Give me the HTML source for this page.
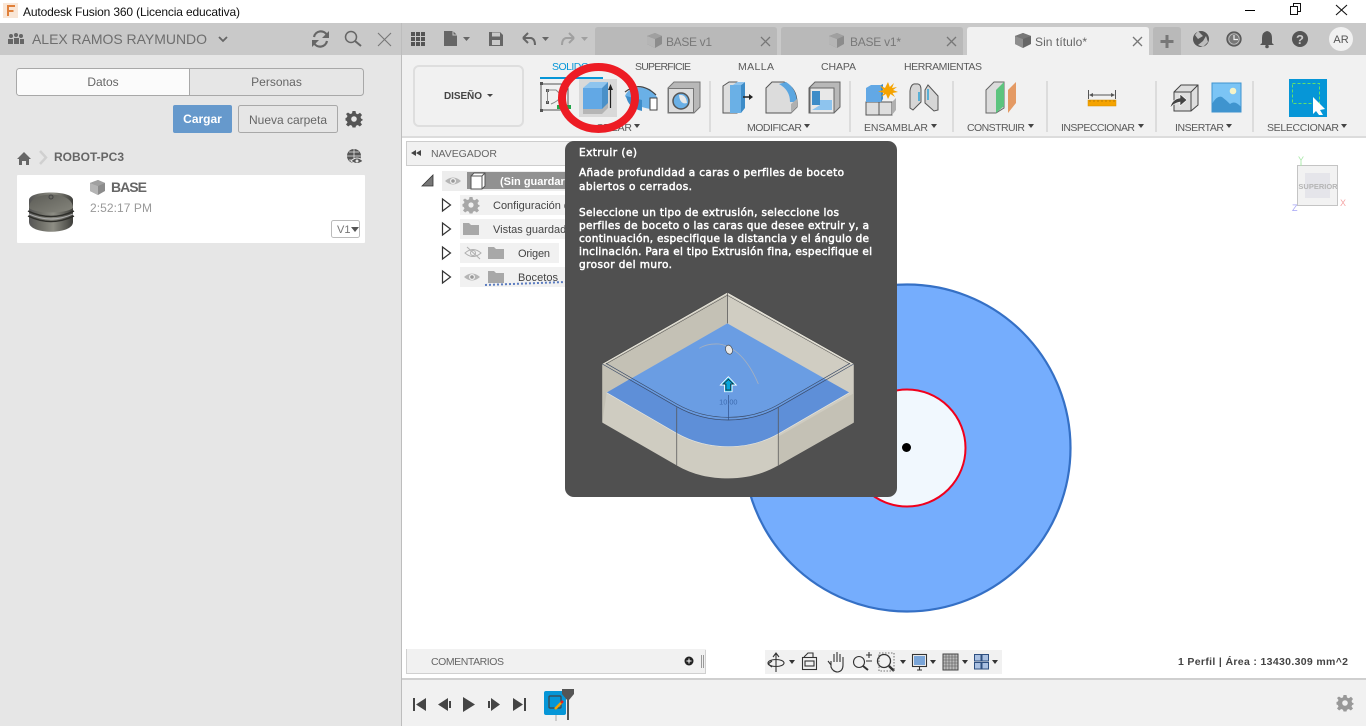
<!DOCTYPE html>
<html lang="es"><head><meta charset="utf-8"><title>Autodesk Fusion 360</title>
<style>
html,body{margin:0;padding:0;width:1366px;height:726px;overflow:hidden;background:#fff}
svg{position:absolute;left:0;top:0;display:block}
text{font-family:"Liberation Sans",sans-serif;font-size:11px;fill:#555}
.r{font-size:10.5px;fill:#5a5a5a}
.tt{font-family:"DejaVu Sans",sans-serif;font-size:10.5px;fill:#fff;stroke:#fff;stroke-width:.5}
.tree{font-size:11px;fill:#444}
</style></head><body>
<svg width="1366" height="726" viewBox="0 0 1366 726" xmlns="http://www.w3.org/2000/svg">
<defs>
<linearGradient id="th" x1="0" x2="1" y1="0" y2="0"><stop offset="0" stop-color="#555"/><stop offset=".25" stop-color="#6d6d66"/><stop offset=".55" stop-color="#8d8d84"/><stop offset=".85" stop-color="#5a5a54"/><stop offset="1" stop-color="#3e3e3a"/></linearGradient>
<linearGradient id="tht" x1="0" x2="1" y1="0" y2="1"><stop offset="0" stop-color="#5c5c56"/><stop offset="1" stop-color="#85857c"/></linearGradient>
<g id="cube"><path d="M0 3L8 0L15 3V11L8 15L0 11Z" fill="#8c8c8c"/><path d="M0 3L8 6V15L0 11Z" fill="#b5b5b5"/><path d="M0 3L8 0L15 3L8 6Z" fill="#a0a0a0"/></g>
<g id="tri"><path d="M1.500 1L9.500 7L1.500 13Z" fill="#fff" stroke="#333" stroke-width="1.200"/></g>
<g id="eye"><path d="M-8 0Q0 -7 8 0Q0 7 -8 0Z" fill="#b5b5b5"/><circle r="3" fill="#f1f1f1"/><circle r="1.800" fill="#999"/></g>
<g id="folder"><path d="M0 2H6L8 4H16V14H0Z" fill="#a8a8a8"/></g>
<path id="gearp" d="M-1.500 -8H1.500L2 -5.500L3.800 -4.800L6 -6.200L8 -4L6.500 -2L7.200 -.3L8.500 0V1.500L7.200 2L6.500 3.500L8 5.500L5.800 7.500L3.800 6L2 6.700L1.500 8.500H-1.500L-2 6.700L-3.800 6L-5.800 7.500L-8 5.500L-6.500 3.500L-7.200 2L-8.500 1.500V-1L-7.200 -1.500L-6.500 -3L-8 -5L-6 -6.500L-3.800 -5L-2 -5.600Z"/>
</defs>

<!-- Base regions -->
<rect width="1366" height="23" fill="#fff"/>
<rect x="0" y="23" width="401" height="703" fill="#e6e6e6"/>
<rect x="0" y="23" width="1366" height="32" fill="#c9c9c9"/>
<rect x="401" y="23" width="1" height="703" fill="#bdbdbd"/>
<rect x="402" y="55" width="964" height="81" fill="#f1f1f1"/>
<rect x="402" y="136" width="964" height="2" fill="#dcdcdc"/>
<rect x="402" y="678" width="964" height="2" fill="#cfcfcf"/>
<rect x="402" y="680" width="964" height="46" fill="#f1f1f1"/>

<!-- Title bar -->
<rect x="3" y="3" width="15" height="15" fill="#f9e6d6"/>
<path d="M7 5H15V7H9V10H13.500V12H9V16H7Z" fill="#e0803a"/>
<text x="23" y="16" style="font-size:12px;fill:#111" textLength="217">Autodesk Fusion 360 (Licencia educativa)</text>
<rect x="1245" y="10" width="10" height="1" fill="#000"/>
<path d="M1293.500 6.500V3.500H1300.500V11.500H1297.500M1290.500 6.500H1297.500V14.500H1290.500Z" fill="none" stroke="#111"/>
<path d="M1336 5L1347 15M1347 5L1336 15" stroke="#111" stroke-width="1.100"/>

<!-- Left panel header -->
<g fill="#666"><circle cx="11" cy="36" r="2"/><circle cx="16" cy="35" r="2"/><circle cx="21" cy="36" r="2"/><rect x="8" y="39" width="5" height="5"/><rect x="14" y="38" width="5" height="6"/><rect x="20" y="39" width="4" height="5"/></g>
<text x="32" y="44" style="font-size:14px;fill:#6e6e6e" textLength="175">ALEX RAMOS RAYMUNDO</text>
<path d="M219 37L223 41L227 37" fill="none" stroke="#666" stroke-width="1.800"/>
<path d="M327 35A7 7 0 0 0 314 37M314 43A7 7 0 0 0 327 41" fill="none" stroke="#666" stroke-width="2.200"/><path d="M329 31V38H322ZM312 47V40H319Z" fill="#666"/>
<circle cx="351" cy="37" r="5.500" fill="none" stroke="#666" stroke-width="1.500"/><path d="M355 41L361 46" stroke="#666" stroke-width="2"/>
<path d="M378 33L391 46M391 33L378 46" stroke="#777" stroke-width="1.100"/>

<!-- Segmented -->
<rect x="16.500" y="68.500" width="347" height="27" rx="3" fill="#e6e6e6" stroke="#a8a8a8"/>
<path d="M189.500 69V95H19.500Q17 95 17 92V72Q17 69 19.500 69Z" fill="#fbfbfb"/>
<path d="M189.500 68V96" stroke="#a8a8a8"/>
<text x="103" y="86" text-anchor="middle" style="font-size:12px;fill:#666">Datos</text>
<text x="276.500" y="86" text-anchor="middle" style="font-size:12px;fill:#666">Personas</text>
<rect x="173" y="105" width="59" height="28" rx="2" fill="#6699cc"/>
<text x="202.500" y="123" text-anchor="middle" style="font-size:12px;font-weight:bold;fill:#fff">Cargar</text>
<rect x="238.500" y="105.500" width="99" height="27" rx="2" fill="#e6e6e6" stroke="#a8a8a8"/>
<text x="249" y="124" style="font-size:12px;fill:#666" textLength="78">Nueva carpeta</text>
<g transform="translate(354 119)" fill="#555"><use href="#gearp"/><circle r="2.800" fill="#e6e6e6"/></g>

<!-- Breadcrumb -->
<path d="M17 159L24 152L31 159H29V165H26V161H22V165H19V159Z" fill="#666"/>
<path d="M40 151L46 157.500L40 164" fill="none" stroke="#d0d0d0" stroke-width="2.500"/>
<text x="54" y="161" style="font-size:12px;font-weight:bold;fill:#666" textLength="70">ROBOT-PC3</text>
<circle cx="354" cy="156" r="7" fill="#555"/><path d="M347 156H361M354 149V163M349 152H359M349 160H359" stroke="#e6e6e6" stroke-width=".8"/>
<path d="M351 161Q357 155 363 161Q357 166 351 161Z" fill="#555" stroke="#e6e6e6"/><circle cx="357" cy="161" r="1.500" fill="#e6e6e6"/>

<!-- Card -->
<rect x="17" y="175" width="348" height="68" rx="1" fill="#fff"/>
<path d="M29 200C29 190 73 190 73 200V222C73 235 29 235 29 222Z" fill="url(#th)"/>
<path d="M29 208C29 190 73 190 73 208C66 214 36 214 29 208Z" fill="url(#tht)"/>
<circle cx="51" cy="197" r="2" fill="none" stroke="#444"/>
<path d="M28 211Q51 222 74 211M28 216Q51 227 74 216" fill="none" stroke="#2e2e2a" stroke-width="1.500"/><path d="M29 214Q51 224 73 214" fill="none" stroke="#aaa"/>

<use href="#cube" x="90" y="180"/>
<text x="111" y="192" style="font-size:14px;font-weight:bold;fill:#666" textLength="36">BASE</text>
<text x="90" y="212" style="font-size:12px;fill:#999" textLength="62">2:52:17 PM</text>
<rect x="331.500" y="220.500" width="28" height="17" rx="2" fill="#fff" stroke="#bbb"/>
<text x="337" y="233" style="font-size:11px;fill:#777">V1</text><path d="M351 227H359L355 232Z" fill="#555"/>

<!-- Top bar icons -->
<g fill="#555"><rect x="411" y="32" width="4" height="4"/><rect x="416" y="32" width="4" height="4"/><rect x="421" y="32" width="4" height="4"/><rect x="411" y="37" width="4" height="4"/><rect x="416" y="37" width="4" height="4"/><rect x="421" y="37" width="4" height="4"/><rect x="411" y="42" width="4" height="4"/><rect x="416" y="42" width="4" height="4"/><rect x="421" y="42" width="4" height="4"/></g>
<path d="M444 31H453L457 35V46H444Z" fill="#666"/><path d="M453 31V35H457" fill="none" stroke="#c9c9c9"/>
<path d="M463 37H470L466.500 41Z" fill="#666"/>
<path d="M489 32H500L503 35V46H489Z" fill="#666"/><rect x="492" y="32.500" width="8" height="4" fill="#c9c9c9"/><rect x="492" y="40" width="8" height="5" fill="#c9c9c9"/>
<path d="M523 38L528 33M523 38L528 43M524 38H531Q535 39 535 45" fill="none" stroke="#666" stroke-width="2"/>
<path d="M542 37H549L545.500 41Z" fill="#666"/>
<path d="M574 38L569 33M574 38L569 43M573 38H566Q562 39 562 45" fill="none" stroke="#a0a0a0" stroke-width="2"/>
<path d="M581 37H588L584.500 41Z" fill="#a0a0a0"/>

<!-- Tabs -->
<path d="M595 55V30Q595 27 598 27H774Q777 27 777 30V55Z" fill="#b9b9b9"/>
<path d="M781 55V30Q781 27 784 27H960Q963 27 963 30V55Z" fill="#b9b9b9"/>
<path d="M967 55V30Q967 27 970 27H1146Q1149 27 1149 30V55Z" fill="#f1f1f1"/>
<path d="M1153 55V30Q1153 27 1156 27H1178Q1181 27 1181 30V55Z" fill="#b9b9b9"/>
<use href="#cube" x="647" y="33"/><use href="#cube" x="829" y="33"/>
<g transform="translate(1015 33)"><path d="M0 3L8 0L16 3V11L8 15L0 11Z" fill="#666"/><path d="M0 3L8 6V15L0 11Z" fill="#8e8e8e"/><path d="M0 3L8 0L16 3L8 6Z" fill="#777"/></g>
<text x="666" y="46" style="font-size:12px;fill:#787878" textLength="46">BASE v1</text>
<text x="850" y="46" style="font-size:12px;fill:#787878" textLength="51">BASE v1*</text>
<text x="1035" y="46" style="font-size:12px;fill:#666" textLength="52">Sin título*</text>
<path d="M761 37L770 46M770 37L761 46M947 37L956 46M956 37L947 46" stroke="#777" stroke-width="1.300"/>
<path d="M1133 37L1142 46M1142 37L1133 46" stroke="#777" stroke-width="1.300"/>
<path d="M1167 35V48M1160.500 41.500H1173.500" stroke="#777" stroke-width="3"/>
<circle cx="1201" cy="39" r="8" fill="#555"/><path d="M1198 31L1203 36L1198 39L1195 35ZM1206 36L1208 42L1203 47L1198 45L1203 41Z" fill="#c9c9c9" opacity=".9"/>
<circle cx="1234" cy="39" r="7" fill="#777" stroke="#555" stroke-width="1.300"/><circle cx="1234" cy="39" r="5.200" fill="#777" stroke="#c9c9c9" stroke-width=".7"/><path d="M1234 35V39.500H1238" fill="none" stroke="#eee" stroke-width="1.200"/>
<path d="M1267 31Q1272 32 1272 38V43L1274 45H1260L1262 43V38Q1262 32 1267 31Z" fill="#555"/><circle cx="1267" cy="46.500" r="1.800" fill="#555"/>
<circle cx="1300" cy="39" r="8" fill="#555"/><text x="1300" y="44" text-anchor="middle" style="font-size:13px;font-weight:bold;fill:#c9c9c9">?</text>
<circle cx="1341" cy="39" r="12" fill="#f1f1f1"/><text x="1341" y="43" text-anchor="middle" style="font-size:11px;fill:#555">AR</text>

<!-- Ribbon tabs -->
<text x="552" y="70" style="font-size:10.500px;fill:#0696d7" textLength="37">SOLIDO</text>
<rect x="540" y="77" width="63" height="2" fill="#0696d7"/>
<text x="635" y="70" class="r" textLength="56">SUPERFICIE</text>
<text x="738" y="70" class="r" textLength="36">MALLA</text>
<text x="821" y="70" class="r" textLength="35">CHAPA</text>
<text x="904" y="70" class="r" textLength="78">HERRAMIENTAS</text>

<rect x="414" y="66" width="109" height="60" rx="5" fill="#f1f1f1" stroke="#dedede" stroke-width="2"/>
<text x="444" y="99" style="font-size:10px;font-weight:bold;fill:#444" textLength="38">DISEÑO</text>
<path d="M487 94H493L490 97Z" fill="#444"/>

<!-- separators -->
<g fill="#dcdcdc"><rect x="709" y="81" width="2" height="51"/><rect x="849" y="81" width="2" height="51"/><rect x="952" y="81" width="2" height="51"/><rect x="1046" y="81" width="2" height="51"/><rect x="1155" y="81" width="2" height="51"/><rect x="1252" y="81" width="2" height="51"/></g>

<!-- Sketch icon -->
<rect x="541" y="84" width="27" height="26" fill="none" stroke="#555"/>
<g fill="#555"><rect x="540" y="82" width="3" height="3"/><rect x="540" y="109" width="3" height="3"/><rect x="566" y="82" width="3" height="3"/><rect x="546" y="89" width="3" height="3"/><rect x="546" y="101" width="3" height="3"/></g>
<path d="M547.500 103V90H556Q566 98 551 104" fill="none" stroke="#888"/>
<rect x="557" y="105" width="14" height="4" fill="#21a649"/>

<!-- Extrude -->
<rect x="579" y="79" width="38" height="38" fill="#d9d9d9"/>
<path d="M583 108V114H602L608 108V103Z" fill="#b5b5b5"/>
<rect x="583" y="88" width="19" height="21" fill="#62a8e5"/>
<path d="M583 88L590 82H608L602 88Z" fill="#8ec4ee"/>
<path d="M602 88L608 82V103L602 109Z" fill="#4a90c8"/>
<path d="M610.500 88V108" stroke="#222" stroke-width="1.200"/><path d="M608 90L610.500 84L613 90Z" fill="#222"/>

<!-- Revolve -->
<path d="M625 96Q630 84 650 89L657 97V109H650Q630 105 625 96Z" fill="#6ab0e6"/>
<path d="M625 92Q640 80 656 95" fill="none" stroke="#444" stroke-width="1.200"/>
<path d="M626 96Q628 108 642 111V100Z" fill="#3d8cc8"/>
<rect x="650" y="98" width="7" height="12" fill="#fff" stroke="#444"/>
<!-- Hole -->
<path d="M668 88L674 82H700V107L694 113H668Z" fill="#b8b8b8" stroke="#777"/>
<rect x="668.500" y="88.500" width="25" height="24" fill="#dcdcdc" stroke="#777"/>
<circle cx="681" cy="101" r="8" fill="#6ab0e6" stroke="#555" stroke-width="1.500"/>
<path d="M679 95Q686 94 687 103Q680 105 679 95Z" fill="#e8e8e8"/>

<!-- Press pull -->
<path d="M723 86L729 82H737V113H723Z" fill="#dedede" stroke="#555"/>
<path d="M730 85H741V113H730Z" fill="#6ab0e6"/><path d="M741 85L745 82V108L741 113Z" fill="#3d8cc8"/>
<path d="M733 85L737 82H745L741 85Z" fill="#8ec4ee"/>
<path d="M743 97H750" stroke="#222" stroke-width="1.500"/><path d="M749 94L753 97L749 100Z" fill="#222"/>
<!-- Fillet -->
<path d="M766 88L772 82H784Q797 88 797 103V107L791 113H766Z" fill="#dcdcdc" stroke="#555"/>
<path d="M779 84L786 82Q796 88 797 102L790 102Q790 90 779 84Z" fill="#5ba6e0"/>
<path d="M791 113V104L797 99V107Z" fill="#b0b0b0"/>
<!-- Shell -->
<path d="M809 88L815 82H840V107L834 113H809Z" fill="#b8b8b8" stroke="#666"/>
<rect x="810" y="88" width="24" height="25" fill="#e8e8e8" stroke="#666"/>
<path d="M812 91H820V105H812Z" fill="#3d8cc8"/><path d="M820 100H832V110H812L820 105Z" fill="#8ec4ee"/>

<!-- Assemble -->
<rect x="866" y="102" width="13" height="13" fill="#dedede" stroke="#555"/><rect x="879" y="102" width="13" height="13" fill="#dedede" stroke="#555"/>
<path d="M892 102L896 98V110L892 115Z" fill="#b0b0b0"/>
<path d="M866 88L871 85H881V102H866Z" fill="#62a8e5"/><path d="M881 85L883 84V99L881 102Z" fill="#3d8cc8"/>
<path d="M888 82L889.800 87L894 83L892 88L897 87L893 90L898 92L892.500 93L895 97L890.500 94L888 99L886 94L881 97L884 93L878 91.500L883.500 90L880 85.500L885 88Z" fill="#f5a300"/>
<path d="M910 91Q911 83 916 84Q921 83 921 90V102L913 110L910 108Z" fill="#d6d6d6" stroke="#555"/>
<path d="M925 90L928 85L938 96V110L934 111L925 103Z" fill="#d6d6d6" stroke="#555"/>
<path d="M919 92V101M928 89V100" stroke="#0696d7" stroke-width="1.200"/>

<!-- Construct -->
<path d="M986 90L994 82H1004V108L996 113H986Z" fill="#dcdcdc" stroke="#666"/>
<path d="M996 90L1004 82V106L996 113Z" fill="#5cc47e"/>
<path d="M1008 90L1016 82V103L1008 113Z" fill="#e49a64"/>

<!-- Inspect -->
<rect x="1088" y="100" width="28" height="6" fill="#f5a300" stroke="#d48c00" stroke-width=".5"/>
<path d="M1090 100V102M1094 100V102M1098 100V102M1102 100V102M1106 100V102M1110 100V102M1114 100V102" stroke="#a86f00" stroke-width=".7"/>
<path d="M1088.500 90V99M1115.500 90V99M1090 95H1114" stroke="#555"/><path d="M1089 95L1093 93V97ZM1115 95L1111 93V97Z" fill="#555"/>

<!-- Insert -->
<path d="M1174 92L1181 85H1198V105L1191 111H1174Z" fill="#dedede" stroke="#444"/><path d="M1174 92H1191V111M1191 92L1198 85" fill="none" stroke="#444"/>
<path d="M1170 108Q1172 99 1180 98V94L1187 100L1180 106V102Q1174 103 1170 108Z" fill="#444" stroke="#fff" stroke-width=".6"/>
<!-- Image -->
<rect x="1212" y="83" width="29" height="29" fill="#7bc4f5" stroke="#3f94cf"/>
<circle cx="1233" cy="91" r="3.300" fill="#f5f3c8"/>
<path d="M1212 112V104Q1217 95 1222 97Q1226 100 1230 104Q1235 100 1241 107V112Z" fill="#3f94cf"/>

<!-- Select -->
<rect x="1289" y="79" width="38" height="38" fill="#0696d7"/>
<rect x="1292.500" y="83.500" width="27" height="20" fill="none" stroke="#62e06c" stroke-dasharray="3 2"/>
<path d="M1313 97L1325 109L1320 110L1323 115L1319 115L1316 111L1313 114Z" fill="#fff"/>

<!-- Ribbon group labels -->
<text x="596" y="131" class="r" textLength="36">CREAR</text>
<text x="747" y="131" class="r" textLength="55">MODIFICAR</text>
<text x="864" y="131" class="r" textLength="64">ENSAMBLAR</text>
<text x="967" y="131" class="r" textLength="58">CONSTRUIR</text>
<text x="1061" y="131" class="r" textLength="74">INSPECCIONAR</text>
<text x="1175" y="131" class="r" textLength="49">INSERTAR</text>
<text x="1267" y="131" class="r" textLength="72">SELECCIONAR</text>
<g fill="#444"><path d="M634 124H640L637 128Z"/><path d="M804 124H810L807 128Z"/><path d="M931 124H937L934 128Z"/><path d="M1028 124H1034L1031 128Z"/><path d="M1138 124H1144L1141 128Z"/><path d="M1226 124H1232L1229 128Z"/><path d="M1341 124H1347L1344 128Z"/></g>

<!-- Red ring -->
<ellipse cx="598.500" cy="98" rx="36.500" ry="31" fill="none" stroke="#ed1c24" stroke-width="8"/>

<!-- Canvas geometry -->
<circle cx="907" cy="448" r="163.500" fill="#75adfd" stroke="#3570c5" stroke-width="2.200"/>
<circle cx="907" cy="448" r="58.500" fill="#f1f8fe" stroke="#f0001c" stroke-width="2"/>
<circle cx="906.500" cy="447.500" r="4.500" fill="#000"/>

<!-- ViewCube -->
<rect x="1297.500" y="165.500" width="40" height="40" fill="#f2f2f2" stroke="#c4c4c4"/>
<rect x="1305" y="173" width="25" height="25" fill="#e5e5ea"/>
<text x="1318" y="189" text-anchor="middle" style="font-size:7.500px;font-weight:bold;fill:#b5b5b5">SUPERIOR</text>
<text x="1298" y="163" style="font-size:9px;fill:#a8e8a8">Y</text>
<text x="1340" y="206" style="font-size:9px;fill:#f5a5a5">X</text>
<text x="1292" y="211" style="font-size:9px;fill:#a5a5f5">Z</text>
<path d="M1301 163V166" stroke="#a8e8a8"/>

<!-- Navigator -->
<rect x="406.500" y="141.500" width="170" height="24" fill="#f1f1f1" stroke="#cdcdcd"/>
<path d="M416 150V156L411 153ZM421 150V156L416 153Z" fill="#444"/>
<text x="431" y="157" style="font-size:10.500px;fill:#666" textLength="66">NAVEGADOR</text>

<path d="M422 186L433 175V186Z" fill="#777" stroke="#333" stroke-width=".8"/>
<rect x="442" y="171" width="135" height="20" fill="#ededed"/>
<rect x="467" y="172" width="110" height="17" fill="#919191"/>
<use href="#eye" x="453" y="181"/>
<path d="M471 176L474 173H485V186L482 189H471Z" fill="#fff" stroke="#555"/><path d="M471 176H482V189M482 176L485 173" fill="none" stroke="#555"/>
<text x="500" y="185" style="font-weight:bold;fill:#fff">(Sin guardar</text>

<use href="#tri" x="441" y="198"/><rect x="460" y="195" width="117" height="20" fill="#f1f1f1"/>
<g transform="translate(471 205)" fill="#a8a8a8"><use href="#gearp"/><circle r="2.600" fill="#f1f1f1"/></g>
<text x="493" y="209" class="tree">Configuración d</text>

<use href="#tri" x="441" y="222"/><rect x="460" y="219" width="117" height="20" fill="#f1f1f1"/>
<use href="#folder" x="463" y="221"/>
<text x="493" y="233" class="tree">Vistas guardad</text>

<use href="#tri" x="441" y="246"/><rect x="460" y="243" width="99" height="20" fill="#f1f1f1"/>
<path d="M465 253Q473 246 481 253Q473 260 465 253Z" fill="none" stroke="#b0b0b0"/><circle cx="473" cy="253" r="2.500" fill="none" stroke="#b0b0b0"/><path d="M467 247L480 259" stroke="#b0b0b0"/>
<use href="#folder" x="488" y="245"/>
<text x="518" y="257" class="tree" textLength="32">Origen</text>

<use href="#tri" x="441" y="270"/><rect x="460" y="267" width="117" height="20" fill="#f1f1f1"/>
<use href="#eye" x="472" y="277"/>
<use href="#folder" x="488" y="269"/>
<text x="518" y="281" class="tree" textLength="40">Bocetos</text>
<path d="M485 285L565 282" stroke="#5b7cc0" stroke-width="2" stroke-dasharray="2 2"/>

<!-- Tooltip -->
<rect x="565" y="141" width="332" height="356" rx="9" fill="#505050"/>
<text class="tt" x="579" y="156" textLength="58">Extruir (e)</text>
<text class="tt" x="579" y="176" textLength="265">Añade profundidad a caras o perfiles de boceto</text>
<text class="tt" x="579" y="190" textLength="113">abiertos o cerrados.</text>
<text class="tt" x="579" y="216" textLength="260">Seleccione un tipo de extrusión, seleccione los</text>
<text class="tt" x="579" y="229" textLength="290">perfiles de boceto o las caras que desee extruir y, a</text>
<text class="tt" x="579" y="242" textLength="290">continuación, especifique la distancia y el ángulo de</text>
<text class="tt" x="579" y="255" textLength="293">inclinación. Para el tipo Extrusión fina, especifique el</text>
<text class="tt" x="579" y="268" textLength="93">grosor del muro.</text>

<!-- Tooltip illustration -->
<svg x="570" y="280" width="320" height="215" viewBox="0 0 960 645">
<path d="M472 38L851 252V428L625 556C580 582 530 595 475 595C420 595 370 585 320 556L97 428V252Z" fill="#cfccc1"/>
<path d="M472 38V130L110 338L97 428V252Z" fill="#c4c1b5"/>
<path d="M472 38V130L838 338L851 428V252Z" fill="#d0cdc2"/>
<path d="M625 470L851 340V428L625 556Z" fill="#c4c1b5"/>
<path d="M472 130L838 338L628 460C580 488 530 500 475 500C420 500 370 488 320 460L110 338Z" fill="#6a9de3"/>
<path d="M180 297L320 378C370 406 420 418 475 418C530 418 580 406 628 378L765 297L838 338L628 460C580 488 530 500 475 500C420 500 370 488 320 460L110 338Z" fill="#5e8fd8"/>
<path d="M110 338L320 460C370 488 420 500 475 500C530 500 580 488 628 460L838 338" fill="none" stroke="#e8e6dc" stroke-width="2"/>
<path d="M97 252L320 380C370 408 420 420 475 420C530 420 580 408 628 380L851 252" fill="none" stroke="#3a4a66" stroke-width="2"/>
<path d="M108 250L320 372C370 400 420 412 475 412C530 412 580 400 628 372L840 250" fill="none" stroke="#3a4a66" stroke-width="2"/>
<path d="M100 252L472 40L848 252" fill="none" stroke="#f1efe5" stroke-width="2"/>
<path d="M108 252L472 46L840 252" fill="none" stroke="#444" stroke-width="1.500"/>
<path d="M96 251L472 36L852 251" fill="none" stroke="#444" stroke-width="1"/>
<path d="M472 38V130" stroke="#444" stroke-width="2"/>
<path d="M320 382V556M625 382V556" stroke="#555" stroke-width="3" opacity=".75"/>
<path d="M388 205Q410 190 448 192Q520 205 565 312" fill="none" stroke="#b5b5b5" stroke-width="2.500" opacity=".8"/>
<ellipse cx="477" cy="209" rx="10" ry="14" transform="rotate(-20 477 209)" fill="#e8e8e8" stroke="#444" stroke-width="2"/>
<path d="M475 292L496 314H485V334H465V314H454Z" fill="#05a5dc" stroke="#fff" stroke-width="5" paint-order="stroke"/>
<path d="M475 298L490 312H482V330H468V312H460Z" fill="#05a5dc" stroke="#222" stroke-width="2"/>
<path d="M475 345V420" stroke="#2b4d86" stroke-width="2"/>
<text x="475" y="374" text-anchor="middle" style="font-size:22px;fill:#3e6cb0">10.00</text>
</svg>

<!-- Comments -->
<rect x="406.500" y="649.500" width="299" height="24" fill="#f1f1f1" stroke="#d0d0d0"/>
<rect x="407" y="649" width="299" height="1" fill="#f1f1f1"/>
<text x="431" y="665" style="font-size:10.500px;fill:#666" textLength="73">COMENTARIOS</text>
<circle cx="689" cy="661" r="4.500" fill="#222"/><path d="M686.500 661H691.500M689 658.500V663.500" stroke="#fff"/>
<path d="M701.500 655V668M703.500 655V668" stroke="#999"/>

<!-- Nav bar -->
<rect x="765" y="650" width="237" height="24" fill="#f1f1f1"/>
<g fill="none" stroke="#333" stroke-width="1.100">
<path d="M776 654V672M773 657L776 653L779 657"/><ellipse cx="776" cy="663" rx="8" ry="3.500"/>
<path d="M768 664L772 661M768 664L772 667"/>
<rect x="802.500" y="657.500" width="14" height="12"/><rect x="805" y="661" width="9" height="5"/><path d="M804 657L808 653H813V657"/>
<path d="M831 661V667Q833 672 838 672Q843 671 843 665V658M831 665L828 661M834 662V654M837 662V652M840 662V654M843 663V657"/>
<circle cx="859" cy="662" r="5.500"/><path d="M863 666L868 670" stroke-width="2"/><path d="M866 655H872M869 652V658M866 661H872"/>
<circle cx="884" cy="661" r="6.500" stroke-width="1.300"/><path d="M889 666L894 671" stroke-width="2.500"/>
<rect x="879" y="653" width="15" height="18" stroke-dasharray="1.500 1.500" stroke="#777"/>
<rect x="912.500" y="654.500" width="14" height="12"/><path d="M917 670H922M919.500 667V670"/>
</g>
<rect x="914" y="656" width="11" height="9" fill="#7aa5d8"/>
<rect x="943" y="654" width="15" height="16" fill="#bbb" stroke="#444"/>
<path d="M946 654V670M949 654V670M952 654V670M955 654V670M943 657H958M943 660H958M943 663H958M943 666H958" stroke="#555" stroke-width=".6"/>
<g fill="#a9c0e2" stroke="#2e4f80"><rect x="974.500" y="654.500" width="6.500" height="6.500"/><rect x="982" y="654.500" width="6.500" height="6.500"/><rect x="974.500" y="662.500" width="6.500" height="6.500"/><rect x="982" y="662.500" width="6.500" height="6.500"/></g>
<g fill="#333"><path d="M789 660H795L792 664Z"/><path d="M900 660H906L903 664Z"/><path d="M930 660H936L933 664Z"/><path d="M962 660H968L965 664Z"/><path d="M992 660H998L995 664Z"/></g>

<text x="1178" y="665" style="font-size:10.500px;font-weight:bold;fill:#444" textLength="170">1 Perfil | Área : 13430.309 mm^2</text>

<!-- Timeline -->
<g fill="#444">
<path d="M413 698H415V711H413ZM426 698V711L416 704.500Z"/>
<path d="M448 698V711L438 704.500ZM449 701H451V708H449Z"/>
<path d="M463 697L475 704.500L463 712Z"/>
<path d="M488 701H490V708H488ZM491 698L500 704.500L491 711Z"/>
<path d="M513 698L523 704.500L513 711ZM524 698H526V711H524Z"/>
</g>
<rect x="544" y="691" width="22" height="24" rx="2" fill="#0696d7"/>
<rect x="549" y="696" width="12" height="12" rx="1" fill="none" stroke="#444" stroke-width="1.200"/>
<path d="M555 709L562 702" stroke="#f5a300" stroke-width="2.500"/><path d="M561 703L563 701" stroke="#e02020" stroke-width="2.500"/>
<rect x="555" y="715" width="2" height="6" fill="#ccc"/>
<path d="M562 689H574V694L569 700H567L562 694Z" fill="#555"/><rect x="567" y="698" width="2" height="22" fill="#555"/>
<g transform="translate(1345 703)" fill="#999"><use href="#gearp"/><circle r="2.800" fill="#f1f1f1"/></g>
</svg>
</body></html>
